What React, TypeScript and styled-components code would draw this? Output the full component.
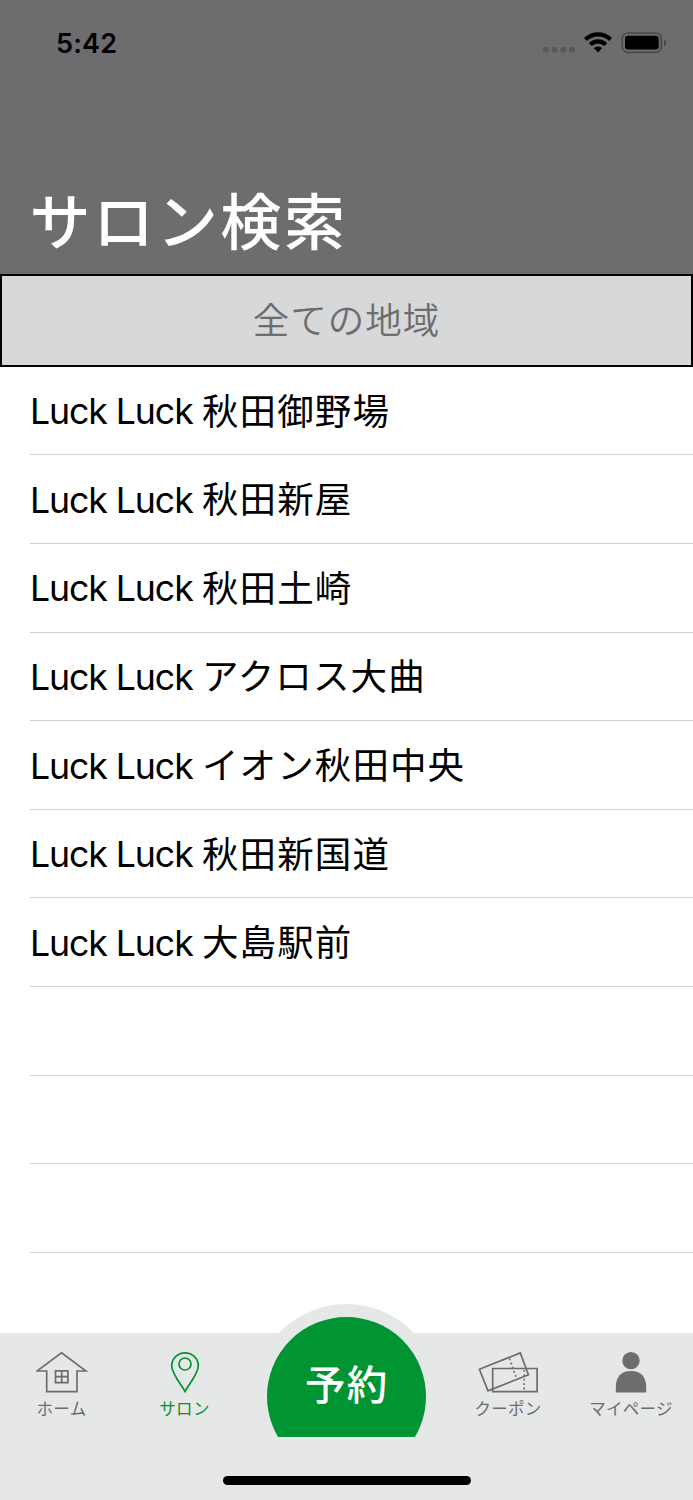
import React from "react";
import styled, { createGlobalStyle } from "styled-components";

const GlobalStyle = createGlobalStyle`
  * { box-sizing: border-box; }
  body { margin: 0; background: #fff; }
`;

const latin = `Inter, "Noto Sans CJK JP", sans-serif`;
const japanese = `"Noto Sans CJK JP", sans-serif`;

const Screen = styled.div`
  position: relative;
  display: flex;
  flex-direction: column;
  width: 693px;
  height: 1500px;
  overflow: hidden;
  background: #fff;
  font-family: ${latin};
`;

const Header = styled.header`
  display: flex;
  flex-direction: column;
  justify-content: space-between;
  flex: none;
  height: 274px;
  background: #6d6d6f;
`;

const StatusBar = styled.div`
  display: flex;
  justify-content: space-between;
  align-items: center;
  height: 86px;
  padding: 0 26px 0 56px;
`;

const Clock = styled.span`
  padding-top: 2px;
  font-size: 27px;
  font-weight: 600;
  line-height: 34px;
  letter-spacing: 0.2px;
  color: #000;
`;

const Title = styled.h1`
  margin: 0;
  padding-left: 29.5px;
  height: 107px;
  font: 500 61px/104px ${japanese};
  letter-spacing: 2.6px;
  white-space: nowrap;
  color: #fff;
`;

const RegionButton = styled.button`
  flex: none;
  height: 92.5px;
  padding: 0 0 3px;
  border: 2px solid #000;
  border-radius: 0;
  background: #d7d8da;
  color: #6d6d6f;
  font: 350 36.5px/85px ${japanese};
  letter-spacing: 1px;
`;

const List = styled.ul`
  flex: 1;
  margin: 0;
  padding: 0.4px 0 0 30px;
  list-style: none;
`;

const Row = styled.li`
  display: flex;
  align-items: center;
  height: 88.6px;
  border-bottom: 1px solid #d2d2d4;
  white-space: pre;
  color: #000;
`;

const Brand = styled.span`
  width: 172px;
  padding-top: 1px;
  font-size: 35.7px;
  letter-spacing: -1.1px;
`;

const Branch = styled.span`
  padding-bottom: 2px;
  font: 400 36.5px/84px ${japanese};
  letter-spacing: 1.1px;
`;

const TabBar = styled.nav`
  position: relative;
  flex: none;
  height: 167px;
  background: #e6e7e7;
`;

const Tabs = styled.div`
  display: grid;
  grid-template-columns: 123px 123px 200.5px 123px 123px;
  height: 104px;
`;

const Tab = styled.a<{ $active?: boolean }>`
  display: flex;
  flex-direction: column;
  align-items: center;
  padding-top: 18px;
  color: ${(p) => (p.$active ? "#009432" : "#6d6d6f")};
`;

const TabLabel = styled.span`
  height: 30px;
  font: 400 16.5px/30px ${japanese};
  letter-spacing: 0.3px;
  white-space: nowrap;
`;

const ReserveWindow = styled.div`
  position: absolute;
  left: 254.3px;
  bottom: 63px;
  width: 185px;
  height: 133px;
  overflow: hidden;
`;

const ReserveButton = styled.button`
  width: 185px;
  height: 185px;
  padding: 0 0 28px;
  border: 13px solid #e6e7e7;
  border-radius: 50%;
  background: #009432;
  color: #fff;
  font: 500 40.5px/60px ${japanese};
  letter-spacing: 1.2px;
`;

const HomeIndicator = styled.div`
  width: 248px;
  height: 9px;
  margin: 39px auto 0;
  border-radius: 5px;
  background: #000;
`;

const StatusIcons = () => (
  <svg width="124" height="24" viewBox="543 31 124 24" fill="none">
    <g fill="#59595b">
      <rect x="543" y="47" width="5.6" height="5.6" rx="1.5" />
      <rect x="551.8" y="47" width="5.6" height="5.6" rx="1.5" />
      <rect x="560.5" y="47" width="5.6" height="5.6" rx="1.5" />
      <rect x="569.2" y="47" width="5.6" height="5.6" rx="1.5" />
    </g>
    <g stroke="#000" strokeWidth="4.2">
      <path d="M585.4 39.5a18 18 0 0 1 25.2 0" />
      <path d="M590.2 44.6a11.1 11.1 0 0 1 15.6 0" />
    </g>
    <path d="M598 52.4l-4.2-4.3a6 6 0 0 1 8.4 0z" fill="#000" />
    <rect x="622.2" y="33" width="39.2" height="19.4" rx="5.5" stroke="#49494b" strokeWidth="1.6" />
    <rect x="625" y="35.8" width="33.7" height="13.8" rx="3" fill="#000" />
    <path d="M664 39.2c2.8 1 2.8 6 0 7z" fill="#49494b" />
  </svg>
);

const HomeIcon = () => (
  <svg width="52" height="42" viewBox="36 1351 52 42" fill="none" stroke="currentColor" strokeWidth="1.7">
    <path d="M61.5 1352.8L86 1371H77v20.7H46.7V1371H37z" />
    <path d="M55.5 1370.8h12.4v11.8H55.5zM61.7 1370.8v11.8M55.5 1376.7h12.4" />
  </svg>
);

const PinIcon = () => (
  <svg width="30" height="42" viewBox="170 1351 30 42" fill="none" stroke="currentColor" strokeWidth="1.7">
    <path d="M185 1391.5C181 1384 171.7 1374 171.7 1365.5a13.3 12.7 0 0 1 26.6 0C198.3 1374 189 1384 185 1391.5z" />
    <circle cx="185" cy="1364" r="6" />
  </svg>
);

const CouponIcon = () => (
  <svg width="60" height="42" viewBox="478 1351 60 42" fill="none" stroke="currentColor" strokeWidth="1.7">
    <path d="M479.4 1369.2L520.3 1352.9l8.1 21.8-40.4 16.2z" />
    <path d="M492.7 1368.5h44.4v23.2h-44.4z" />
    <path d="M509.5 1358.5l7 20M524.2 1370v21" strokeDasharray="1.8 2.6" />
  </svg>
);

const PersonIcon = () => (
  <svg width="32" height="42" viewBox="615 1351 32 42" fill="currentColor">
    <circle cx="631" cy="1360.6" r="8.7" />
    <path d="M615.8 1392.5v-5.3c0-10 5-16.2 15.2-16.2s15.2 6.2 15.2 16.2v5.3z" />
  </svg>
);

const branches = ["秋田御野場", "秋田新屋", "秋田土崎", "アクロス大曲", "イオン秋田中央", "秋田新国道", "大島駅前", "", "", ""];

export default function App() {
  return (
    <Screen>
      <GlobalStyle />
      <Header>
        <StatusBar>
          <Clock>5:42</Clock>
          <StatusIcons />
        </StatusBar>
        <Title>サロン検索</Title>
      </Header>
      <RegionButton>全ての地域</RegionButton>
      <List>
        {branches.map((branch, i) => (
          <Row key={i}>
            {branch && (
              <>
                <Brand>Luck Luck </Brand>
                <Branch>{branch}</Branch>
              </>
            )}
          </Row>
        ))}
      </List>
      <TabBar>
        <Tabs>
          <Tab><HomeIcon /><TabLabel>ホーム</TabLabel></Tab>
          <Tab $active><PinIcon /><TabLabel>サロン</TabLabel></Tab>
          <span />
          <Tab><CouponIcon /><TabLabel>クーポン</TabLabel></Tab>
          <Tab><PersonIcon /><TabLabel>マイページ</TabLabel></Tab>
        </Tabs>
        <ReserveWindow>
          <ReserveButton>予約</ReserveButton>
        </ReserveWindow>
        <HomeIndicator />
      </TabBar>
    </Screen>
  );
}
